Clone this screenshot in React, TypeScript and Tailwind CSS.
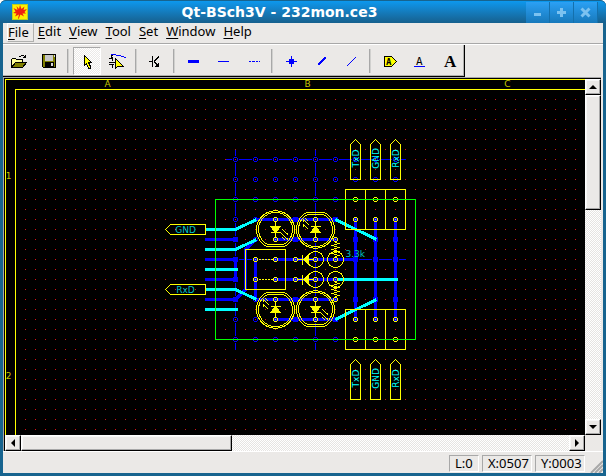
import React from "react";

const MENUS = ["File", "Edit", "View", "Tool", "Set", "Window", "Help"];
const STATUS = ["L:0", "X:0507", "Y:0003"];

const BLUE = "#0000ff";
const CYAN = "#00ffff";
const YELLOW = "#ffff00";
const TEAL = "#00c4c4";

const HOLE_X = [235, 255, 275, 295, 315, 335, 355, 375, 395];
const HOLE_Y = [159, 179, 199, 219, 239, 259, 279, 299, 319, 339];

const BUS_LINES = [
  "M204 239H237",
  "M204 259H237",
  "M204 279H237",
  "M204 299H235L245 289V249L255 239",
  "M235 259V279",
  "M255 219H335",
  "M275 239H335",
  "M255 259V299",
  "M275 259H355",
  "M275 279H335",
  "M255 299H335",
  "M275 319H335",
  "M355 219V319",
  "M375 219V319",
  "M395 219V319",
];

const WIRE_LINES = [
  "M204 229H235L256 219",
  "M204 249H235L256 239",
  "M204 269H237",
  "M204 289H235L256 299",
  "M204 309H237",
  "M335 219L376 239",
  "M335 279H397",
  "M335 319L376 299",
];

const JUNCTIONS = [
  [235, 239], [235, 259], [235, 279], [235, 299],
  [295, 219], [295, 239], [295, 299], [295, 319],
  [335, 219], [335, 319],
  [355, 239], [375, 239], [395, 239],
  [355, 259], [375, 259], [395, 259],
  [355, 299], [375, 299], [395, 299],
];

const PADS = [
  [275, 219], [275, 239], [315, 219], [315, 239], [335, 239],
  [255, 259], [275, 259], [295, 259], [315, 259], [335, 259],
  [255, 279], [275, 279], [295, 279], [315, 279], [335, 279],
  [275, 299], [275, 319], [315, 299], [315, 319], [335, 299],
  [355, 219], [375, 219], [395, 219],
  [355, 319], [375, 319], [395, 319],
];

const OPEN_PADS = [
  [355, 199], [375, 199], [395, 199],
  [355, 339], [375, 339], [395, 339],
];

function Led({ x, y, flip }: { x: number; y: number; flip?: boolean }) {
  return (
    <g
      transform={`translate(${x} ${y})${flip ? " rotate(180)" : ""}`}
      fill="none"
      stroke={YELLOW}
    >
      <path d="M-9 17A19 19 0 1 1 9 17Z" />
      <path d="M-8 15A17 17 0 1 1 8 15Z" />
      <path d="M0 -8V8M-5 3H5" />
      <path d="M-5 -3H5L0 3Z" fill={YELLOW} />
      <path d="M7 0L12 5M12 3V5M6 4L12 10M12 8V10M7 8L10 11" />
    </g>
  );
}

function SmallDiode({ y }: { y: number }) {
  return (
    <g transform={`translate(315 ${y})`} fill="none" stroke={YELLOW}>
      <circle r="8" />
      <circle cx="20" r="8" />
      <path d="M-18 0H-2M-13 -5V5" />
      <path d="M-12 0L-7 -5V5Z" fill={YELLOW} />
    </g>
  );
}

function Resistor({ y }: { y: number }) {
  return (
    <path
      d={`M335 ${y}v3l3 1l-6 2l6 2l-6 2l6 2l-6 2l6 2l-3 1v3`}
      fill="none"
      stroke={YELLOW}
    />
  );
}

function Connector({ y }: { y: number }) {
  return (
    <path
      d={`M345 ${y}h60v40h-60zM365 ${y}v40M385 ${y}v40`}
      fill="none"
      stroke={YELLOW}
    />
  );
}

function UpTag({ x, y, label }: { x: number; y: number; label: string }) {
  return (
    <g>
      <path
        d={`M${x} ${y}l5 5v35h-10v-35z`}
        fill="none"
        stroke={YELLOW}
      />
      <text
        transform={`translate(${x + 3} ${y + 19}) rotate(-90)`}
        textAnchor="middle"
        fill={CYAN}
      >
        {label}
      </text>
    </g>
  );
}

function LeftTag({ y, label }: { y: number; label: string }) {
  return (
    <g>
      <path d={`M165 ${y}l5 -5h35v10h-35z`} fill="none" stroke={YELLOW} />
      <text x="185" y={y + 3} textAnchor="middle" fill={TEAL}>
        {label}
      </text>
    </g>
  );
}

function Schematic() {
  return (
    <svg
      role="img"
      aria-label="232mon.ce3"
      className="block min-h-0 min-w-0 bg-black font-['DejaVu_Sans',sans-serif] text-[9px]"
      width="100%"
      height="100%"
      shapeRendering="crispEdges"
    >
      <defs>
        <pattern id="dots" width="10" height="10" patternUnits="userSpaceOnUse">
          <rect width="1" height="1" fill="#dd1111" />
        </pattern>
      </defs>
      <svg x="20" y="20" width="100%" height="100%">
        <rect width="100%" height="100%" fill="url(#dots)" />
      </svg>
      <g transform="translate(-4.5 -78.5)">
        <path d="M2000 79H5V2000M2000 89H15V2000" fill="none" stroke={YELLOW} />
        <g fill="#c4c400" textAnchor="middle">
          <text x="107" y="86">A</text>
          <text x="307" y="86">B</text>
          <text x="507" y="86">C</text>
          <text x="8" y="178">1</text>
          <text x="8" y="378">2</text>
        </g>

        {/* perforated board */}
        <path
          d="M235 149V349M315 149V349M225 159H405M225 259H405"
          fill="none"
          stroke={BLUE}
        />
        {HOLE_Y.map((y) =>
          HOLE_X.map((x) => (
            <g key={`${x}-${y}`}>
              <circle cx={x} cy={y} r="3" fill="#000" stroke="#000" />
              <circle cx={x} cy={y} r="2" fill="none" stroke={BLUE} />
              <rect x={x - 0.5} y={y - 0.5} width="1" height="1" fill="#dd1111" />
            </g>
          ))
        )}

        <g fill="none" stroke={BLUE} strokeWidth="3">
          {BUS_LINES.map((d) => (
            <path key={d} d={d} />
          ))}
        </g>
        {JUNCTIONS.map(([x, y]) => (
          <rect key={`${x}-${y}`} x={x - 2.5} y={y - 2.5} width="5" height="5" fill={BLUE} />
        ))}
        <g fill="none" stroke={CYAN} strokeWidth="3">
          {WIRE_LINES.map((d) => (
            <path key={d} d={d} />
          ))}
        </g>

        <rect x="245" y="249" width="40" height="40" fill="none" stroke={YELLOW} />
        <path d="M258 259H272M258 279H272" stroke={YELLOW} strokeDasharray="2 1" />
        <Connector y={189} />
        <Connector y={309} />
        <Led x={275} y={229} />
        <Led x={315} y={229} flip />
        <Led x={275} y={309} flip />
        <Led x={315} y={309} />
        <SmallDiode y={259} />
        <SmallDiode y={279} />
        <Resistor y={239} />
        <Resistor y={279} />
        {PADS.map(([x, y]) => (
          <g key={`${x}-${y}`}>
            <circle cx={x} cy={y} r="2" fill={BLUE} stroke={YELLOW} />
            <rect x={x - 0.5} y={y - 0.5} width="1" height="1" fill="#9999ff" />
          </g>
        ))}
        {OPEN_PADS.map(([x, y]) => (
          <circle key={`${x}-${y}`} cx={x} cy={y} r="2" fill="none" stroke={YELLOW} />
        ))}

        {["TxD", "GND", "RxD"].map((label, i) => (
          <g key={label}>
            <UpTag x={355 + i * 20} y={139} label={label} />
            <UpTag x={355 + i * 20} y={359} label={label} />
          </g>
        ))}
        <LeftTag y={229} label="GND" />
        <LeftTag y={289} label="RxD" />
        <text x="345" y="256" fill={TEAL}>3.3k</text>
        <rect x="215" y="199" width="200" height="140" fill="none" stroke="#00ff00" />
      </g>
    </svg>
  );
}

function Tool({
  label,
  active,
  children,
}: {
  label: string;
  active?: boolean;
  children: React.ReactNode;
}) {
  return (
    <button
      aria-label={label}
      aria-pressed={active}
      className={
        active
          ? "mx-px flex h-7 w-7 items-center justify-center border border-t-[#a8a8a8] border-l-[#a8a8a8] border-r-white border-b-white bg-[repeating-conic-gradient(#ebe9e7_0_25%,#ffffff_0_50%)] bg-[size:2px_2px]"
          : "mx-px flex h-7 w-7 items-center justify-center"
      }
    >
      <svg width="24" height="24" className="shrink-0" shapeRendering="crispEdges">
        {children}
      </svg>
    </button>
  );
}

function Separator() {
  return <div className="mx-[3px] h-6 w-0.5 border-l border-[#a8a8a8] bg-[#d0d0ce]" />;
}

function Toolbar() {
  return (
    <div className="flex border-t border-white">
      <div
        role="toolbar"
        className="flex h-8 items-center border-r border-b border-black pl-px shadow-[inset_-1px_-1px_0_#b0b0ae]"
      >
        <Tool label="Open">
          <path d="M4.5 18.5V10.5L5.5 9.5H8.5L9.5 10.5H15.5V13.5" fill="#ffff99" stroke="#000" />
          <path d="M4.5 18.5L8.5 13.5H19.5L15.5 18.5Z" fill="#808000" stroke="#000" />
          <path d="M12 7.5H13.5L14.5 6.5H16.5L18.5 8.5M18.5 6V9M16 8.5H19" fill="none" stroke="#000" />
        </Tool>
        <Tool label="Save">
          <path d="M5.5 5.5H18.5V18.5H6.5L5.5 17.5Z" fill="#808000" stroke="#000" />
          <rect x="8" y="6" width="8" height="6" fill="#c8c8c8" />
          <rect x="8" y="13" width="9" height="5" fill="#000" />
          <rect x="14" y="14" width="2" height="3" fill="#d8d8d8" />
          <rect x="17" y="6" width="1" height="2" fill="#d8d8d8" />
        </Tool>
        <Separator />
        <Tool label="Select" active>
          <path d="M9.5 6.5V16.5L11.5 14.5L13.5 19.5H15.5V17.5L13.5 13.5H16.5Z" fill="#ffff00" stroke="#000" />
        </Tool>
        <Tool label="Drag">
          <path d="M4 9.500H8M4 13H10M4 15.5H9M7.5 8V12M7.5 16V19" fill="none" stroke="#000" />
          <path d="M6.500 9V6.500H8" fill="none" stroke="#000" />
          <path d="M6 5.5H11M11 6.5H16M16 7.5H19M19 8.5H21" fill="none" stroke="#0000ff" />
          <path d="M10.5 9.5V19.5L12.5 17.5H18.5Z" fill="#ffff00" stroke="#000" />
        </Tool>
        <Separator />
        <Tool label="Place part">
          <path d="M9.5 7V18M6 12.5H9M11 12.5L16 7.5M11 12.5L15.5 17" fill="none" stroke="#000" />
          <path d="M16 13V18H11Z" fill="#000" />
        </Tool>
        <Separator />
        <Tool label="Bus">
          <path d="M7 12.5H18" stroke="#0000ff" strokeWidth="3" />
        </Tool>
        <Tool label="Wire">
          <path d="M7 12.5H18" stroke="#0000ff" />
        </Tool>
        <Tool label="Dashed line">
          <path d="M8 12.5H19" stroke="#0000ff" strokeDasharray="2 1 3 1 2 1" />
        </Tool>
        <Separator />
        <Tool label="Junction">
          <path d="M7 12.5H18M12.5 7V18" stroke="#0000ff" />
          <rect x="10" y="10" width="5" height="5" fill="#0000ff" />
        </Tool>
        <Tool label="Bus entry">
          <path d="M9 16L16.5 8.5" stroke="#0000ff" strokeWidth="2" />
        </Tool>
        <Tool label="Wire entry">
          <path d="M8 17L17 8" stroke="#0000ff" />
        </Tool>
        <Separator />
        <Tool label="Tag">
          <path d="M7.5 7.5H14.5L19.5 12.5L14.5 17.5H7.5Z" fill="#ffff00" stroke="#000" />
          <text x="9" y="16" className="font-['DejaVu_Sans_Mono',monospace] text-[9px] font-bold">A</text>
        </Tool>
        <Tool label="Label">
          <text x="9" y="16" className="font-['DejaVu_Sans_Mono',monospace] text-[11px]">A</text>
          <path d="M7 17.5H18" stroke="#0000ff" />
        </Tool>
        <Tool label="Comment">
          <text x="7" y="18" className="font-['Liberation_Serif',serif] text-[17px] font-bold">A</text>
        </Tool>
      </div>
    </div>
  );
}

const RAISED =
  "border border-t-white border-l-white border-r-black border-b-black bg-[#ebe9e7] shadow-[inset_-1px_-1px_0_#a8a8a8,inset_1px_1px_0_#f8f8f8]";
const TRACK =
  "bg-[repeating-conic-gradient(#e6e4e2_0_25%,#ffffff_0_50%)] bg-[size:2px_2px]";

function Arrow({ label, d }: { label: string; d: string }) {
  return (
    <button aria-label={label} className={`h-4 w-4 shrink-0 ${RAISED}`}>
      <svg width="14" height="14" className="block">
        <path d={d} />
      </svg>
    </button>
  );
}

function WindowButton({ label, d }: { label: string; d: string }) {
  return (
    <button
      aria-label={label}
      className="flex h-[21px] w-6 items-center justify-center border-r border-[#1470ac] bg-linear-to-b from-[#2ba0f4] to-[#1779bb]"
    >
      <svg width="11" height="11" fill="none" stroke="#7cc2f0" strokeWidth="3">
        <path d={d} />
      </svg>
    </button>
  );
}

export default function App() {
  return (
    <div className="bg-white">
      <div className="flex min-h-screen flex-col rounded-t-md bg-[#17648f] px-[3px] pb-[3px] font-['Noto_Sans',sans-serif] text-[13px] leading-4 text-black">
        <header className="-mx-[3px] flex h-[23px] shrink-0 items-center rounded-t-md border-t border-[#17648f] bg-linear-to-b from-[#0c98ee] to-[#16608e] pr-2 pl-3">
          <svg width="16" height="16" className="shrink-0" aria-hidden="true">
            <rect x=".5" y=".5" width="15" height="15" fill="#ffee00" stroke="#b8d020" />
            <path
              d="M8 1L9.500 5L12.500 2.500L11.500 6L15 5L12.500 8L14 9.500L10.500 9.500L12 12.500L8.500 10.500L6.500 15L6 14.500L7 10.500L3 12.500L4.500 9.500L1 9L3.500 7.500L1.500 4L5.500 6L4.500 2L7 5Z"
              fill="#f02010"
            />
          </svg>
          <h1 className="flex-1 pb-px pl-[5px] text-center font-['DejaVu_Sans',sans-serif] text-[14px] font-bold text-white">
            Qt-BSch3V - 232mon.ce3
          </h1>
          <WindowButton label="Minimize" d="M2 7.500H9" />
          <WindowButton label="Maximize" d="M1 5.500H10M5.500 1V10" />
          <WindowButton label="Close" d="M1.500 1.500L9.500 9.500M9.500 1.500L1.500 9.500" />
        </header>

        <div className="flex flex-1 flex-col bg-[#ebe9e7]">
          <nav className="flex h-[21px] border-b border-[#a8a8a8] pb-px pl-1">
            {MENUS.map((name, i) => (
              <button
                key={name}
                className={
                  i === 0
                    ? "border border-t-white border-l-white border-r-[#b0b0ae] border-b-[#b0b0ae] pr-1 pb-0.5"
                    : "px-1 pb-[3px]"
                }
              >
                <u className="underline-offset-2">{name[0]}</u>
                {name.slice(1)}
              </button>
            ))}
          </nav>
          <Toolbar />

          <main className="mr-0.5 flex flex-1 flex-col border-t border-l border-[#a8a8a8]">
            <div className="grid flex-1 grid-cols-[1fr_16px] grid-rows-[1fr_16px] border-t border-l border-black">
              <Schematic />
              <div className={`flex flex-col ${TRACK}`}>
                <Arrow label="Scroll up" d="M3 9H11L7 5Z" />
                <div className={`h-[115px] ${RAISED}`} />
                <div className="flex-1" />
                <Arrow label="Scroll down" d="M3 5H11L7 9Z" />
              </div>
              <div className={`flex ${TRACK}`}>
                <Arrow label="Scroll left" d="M9 3V11L5 7Z" />
                <div className={`w-[211px] ${RAISED}`} />
                <div className="flex-1" />
                <Arrow label="Scroll right" d="M5 3V11L9 7Z" />
              </div>
            </div>
          </main>

          <footer className="flex h-[22px] items-end justify-end gap-[3px] border-t border-white pb-px">
            {STATUS.map((text, i) => (
              <span
                key={text}
                className={
                  i === 0
                    ? "h-[17px] w-[30px] border border-t-[#a8a8a8] border-l-[#a8a8a8] border-r-white border-b-white pl-[5px] leading-[15px]"
                    : "h-[17px] w-[50px] border border-t-[#a8a8a8] border-l-[#a8a8a8] border-r-white border-b-white pl-[5px] leading-[15px]"
                }
              >
                {text}
              </span>
            ))}
            <svg width="15" height="14" className="-mb-px" stroke="#a8a8a8" strokeWidth="2" aria-hidden="true">
              <path d="M3 14L15 2M7 14L15 6M11 14L15 10" />
            </svg>
          </footer>
        </div>
      </div>
    </div>
  );
}
